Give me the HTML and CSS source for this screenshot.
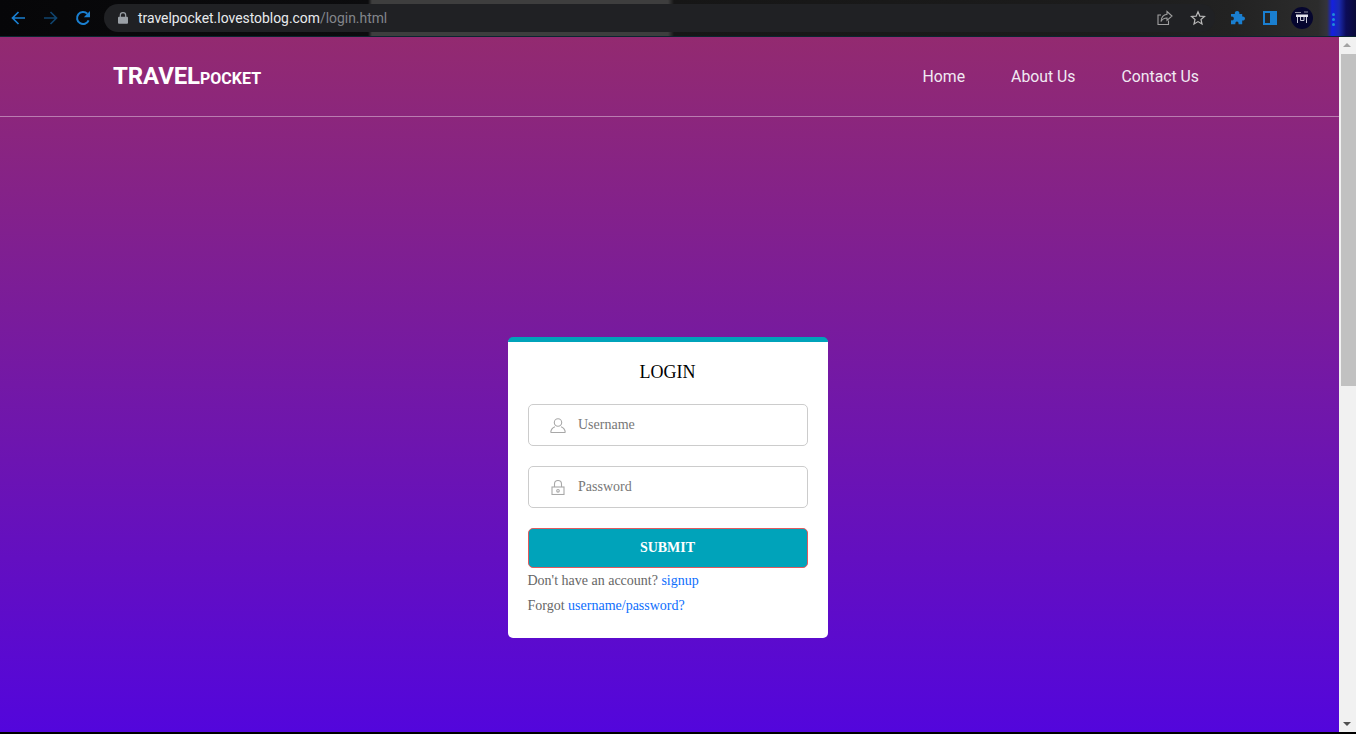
FILE: index.html
```html
<!DOCTYPE html>
<html lang="en">
<head>
<meta charset="utf-8">
<title>Login</title>
<link rel="stylesheet" href="styles.css">
</head>
<body>
<div class="chrome">
  <div class="nav-icons">
    <svg class="tb-icon" viewBox="0 0 16 16"><path d="M15 8H2.500M8.500 2 2.500 8l6 6" fill="none" stroke="#1a7fd0" stroke-width="1.700"/></svg>
    <svg class="tb-icon" viewBox="0 0 16 16"><path d="M1 8h12.500M7.500 2l6 6-6 6" fill="none" stroke="#10446e" stroke-width="1.700"/></svg>
    <svg class="tb-icon tb-reload" viewBox="0 0 16 16"><path d="M13.600 10.300A6 6 0 1 1 12.300 3.800" fill="none" stroke="#1a7fd0" stroke-width="2"/><path d="M15 1v6.200H8.800z" fill="#1a7fd0"/></svg>
  </div>
  <div class="omnibox">
    <svg class="lock" viewBox="0 0 10 12"><path d="M2.300 5V3.400a2.700 2.700 0 0 1 5.400 0V5" fill="none" stroke="#9aa0a6" stroke-width="1.200"/><rect y="4.700" width="10" height="7" rx="1" fill="#9aa0a6"/></svg>
    <span class="url">travelpocket.lovestoblog.com<span class="url-path">/login.html</span></span>
    <span class="omni-actions">
      <svg class="act-icon" viewBox="0 0 16 16"><path d="M10 1.500 15 6l-5 4.300V8C7 8 5.300 9 4 11.500 4.300 7.500 6.500 4.700 10 4.300z M11.500 10.500v4H1v-9.500h3" fill="none" stroke="#a0a0a0" stroke-width="1.100"/></svg>
      <svg class="act-icon" viewBox="0 0 16 16"><path d="m8 1.800 1.800 4.300 4.700.4-3.500 3 1 4.600L8 11.600l-4 2.500 1-4.600-3.500-3 4.700-.4z" fill="none" stroke="#b8b8b8" stroke-width="1.200"/></svg>
    </span>
  </div>
  <div class="ext-icons">
    <svg class="ext-icon" viewBox="0 0 16 16"><path d="M4.400 3.400C4 1.500 5.200 0 7 0s3 1.500 2.600 3.400h3.200v3c1.500-.6 3.200.4 3.200 2.200s-1.700 2.800-3.200 2.200V15H8.600c.3-1.900-.5-2.900-1.800-2.900S4.800 13.100 5 15H0v-4.300c1.800.6 3.300-.3 3.300-2S1.800 6 0 6.600V3.400z" fill="#1a7fd0"/></svg>
    <svg class="ext-icon ext-panel" viewBox="0 0 14 14"><path fill-rule="evenodd" d="M0 0h14v14H0zM2 2v10h5V2z" fill="#1a7fd0"/></svg>
    <span class="avatar"><svg viewBox="0 0 22 22"><path d="M4 5.500h6M13 5h4" stroke="#8a8a9a" stroke-width="1"/><path d="M5 7.500h12v2.500H5z" fill="#e4e4ec"/><path d="M6.500 10v6M15.500 10v6M9.500 10v3.500h3.500V10" fill="none" stroke="#c8c8d4" stroke-width="1"/></svg></span>
  </div>
  <span class="menu-dots"><i></i><i></i><i></i></span>
</div>
<div class="viewport">
  <div class="page">
    <header class="site-header">
      <a class="logo" href="#">TRAVEL<span class="logo-sub">POCKET</span></a>
      <nav class="site-nav">
        <a href="#">Home</a>
        <a href="#">About Us</a>
        <a href="#">Contact Us</a>
      </nav>
    </header>
    <main class="content">
      <form class="card">
        <h1 class="card-title">LOGIN</h1>
        <label class="field">
          <svg class="field-icon" viewBox="0 0 16 15"><circle cx="8" cy="4.500" r="3.700" fill="none" stroke="#a8a8a8" stroke-width="1.100"/><path d="M.7 14.500c.3-3.500 2-5 4.300-5.800M15.300 14.500c-.3-3.500-2-5-4.300-5.800M.7 14.500h14.600" fill="none" stroke="#a8a8a8" stroke-width="1.100"/></svg>
          <span class="placeholder">Username</span>
        </label>
        <label class="field">
          <svg class="field-icon field-icon-lock" viewBox="0 0 14 15"><path d="M3.500 7V4a3.500 3.500 0 0 1 7 0v3" fill="none" stroke="#a8a8a8" stroke-width="1.100"/><rect x="1" y="7" width="12" height="7.500" fill="none" stroke="#a8a8a8" stroke-width="1.100"/><circle cx="7" cy="10.800" r="1.300" fill="none" stroke="#a8a8a8" stroke-width="1.100"/></svg>
          <span class="placeholder">Password</span>
        </label>
        <button class="submit" type="button">SUBMIT</button>
        <p class="hint">Don't have an account? <a href="#">signup</a></p>
        <p class="hint">Forgot <a href="#">username/password?</a></p>
      </form>
    </main>
  </div>
  <div class="scrollbar">
    <span class="arrow arrow-up"></span>
    <span class="thumb"></span>
    <span class="track"></span>
    <span class="arrow arrow-down"></span>
  </div>
</div>
<div class="bottom-edge"></div>
</body>
</html>
```
FILE: styles.css
```css
* { box-sizing: border-box; }
html, body { margin: 0; height: 100%; overflow: hidden; }
body { display: flex; flex-direction: column; background: #000; font-family: "Liberation Serif", serif; }

.chrome {
  height: 37px;
  flex: none;
  display: flex;
  align-items: flex-start;
  padding: 4px 0 0 10px;
  border-bottom: 1px solid #0b2630;
  background: linear-gradient(90deg, #060608 0, #0c0c0e 368px, #3e3e3e 372px, #3e3e3e 668px, #161616 674px, #1c1c1c 1100px, #222 1230px, #2c2c2c 1318px, #34343c 1327px, #1420e0 1332px, #1a2ab0 1339px, #0c0c58 1346px, #0a0a38 1356px);
}
.nav-icons { width: 94px; height: 28px; display: flex; align-items: center; gap: 17px; flex: none; }
.tb-icon { width: 16px; height: 16px; flex: none; }
.tb-reload { margin-left: -1px; }
.omnibox {
  width: 1111px;
  height: 28px;
  flex: none;
  display: flex;
  align-items: center;
  padding: 0 0 0 14px;
  border-radius: 14px;
  background: #202124;
}
.lock { width: 10px; height: 12px; flex: none; }
.url { margin-left: 10px; font: 13.900px "Roboto", sans-serif; color: #e8eaed; }
.url-path { color: #83868b; }
.omni-actions { margin-left: auto; display: flex; align-items: center; gap: 17px; padding-right: 9px; }
.act-icon { width: 16px; height: 16px; flex: none; }
.ext-icons { height: 28px; display: flex; align-items: center; flex: none; margin-left: 16px; }
.ext-icon { width: 14px; height: 14px; flex: none; }
.ext-panel { margin-left: 18px; }
.avatar { width: 22px; height: 22px; margin-left: 14px; border-radius: 50%; background: #06062e; flex: none; display: block; }
.avatar svg { display: block; width: 22px; height: 22px; }
.menu-dots { display: flex; flex-direction: column; gap: 2px; margin: 9px 0 0 19px; }
.menu-dots i { width: 3px; height: 3px; border-radius: 50%; background: #1f8ad8; display: block; }

.viewport { flex: 1; min-height: 0; display: flex; }
.page {
  flex: 1;
  min-width: 0;
  display: flex;
  flex-direction: column;
  background: linear-gradient(180deg, #932a70 0%, #5306dc 100%);
}
.site-header {
  height: 80px;
  flex: none;
  display: flex;
  align-items: center;
  justify-content: space-between;
  padding: 0 140px 0 113px;
  border-bottom: 1px solid rgba(255, 255, 255, .4);
  font-family: "Roboto", sans-serif;
}
.logo { margin-bottom: 2px; color: #fff; text-decoration: none; font-size: 24px; font-weight: 700; letter-spacing: -.100px; }
.logo-sub { font-size: 16px; letter-spacing: 0; }
.site-nav { display: flex; gap: 46px; }
.site-nav a { color: #f1eaf3; text-decoration: none; font-size: 15.800px; }

.content { flex: 1; padding: 220px 0 0 508px; }
.card {
  width: 320px;
  height: 301px;
  padding: 0 20px;
  border-top: 5px solid #00a3ba;
  border-radius: 5px;
  background: #fff;
}
.card-title { margin: 0; padding: 20px 1px 0 0; height: 62px; text-align: center; font-size: 18px; line-height: 21px; font-weight: 400; color: #000; }
.field {
  height: 42px;
  margin-bottom: 20px;
  display: flex;
  align-items: center;
  padding-left: 21px;
  border: 1px solid #ccc;
  border-radius: 5px;
}
.field-icon { width: 16px; height: 15px; flex: none; }
.field-icon-lock { width: 14px; margin-left: 1px; }
.placeholder { margin-left: 12px; font-size: 14px; color: #777; }
.field-icon-lock + .placeholder { margin-left: 13px; }
.submit {
  display: block;
  width: 100%;
  height: 40px;
  padding: 0 1px 0 0;
  border: 1px solid #e05a5f;
  border-radius: 5px;
  background: #00a3ba;
  color: #fff;
  font: 700 14px "Liberation Serif", serif;
}
.hint { margin: 4px 0 0 -.5px; height: 21px; font-size: 14px; line-height: 21px; color: #666; }
.submit + .hint { margin-top: 2px; }
.hint a { color: #0d6efd; text-decoration: none; }

.scrollbar { width: 17px; flex: none; display: flex; flex-direction: column; background: #f1f1f1; }
.arrow { height: 17px; flex: none; display: block; position: relative; }
.arrow::after { content: ""; position: absolute; left: 4px; border-left: 4px solid transparent; border-right: 4px solid transparent; }
.arrow-up::after { top: 6px; border-bottom: 4px solid #a3a3a3; }
.arrow-down::after { top: 7px; border-top: 4px solid #505050; }
.thumb { height: 332px; flex: none; margin: 0 0 0 2px; width: 15px; background: #c1c1c1; }
.track { flex: 1; }
.bottom-edge { height: 2px; flex: none; background: #000; }
```
